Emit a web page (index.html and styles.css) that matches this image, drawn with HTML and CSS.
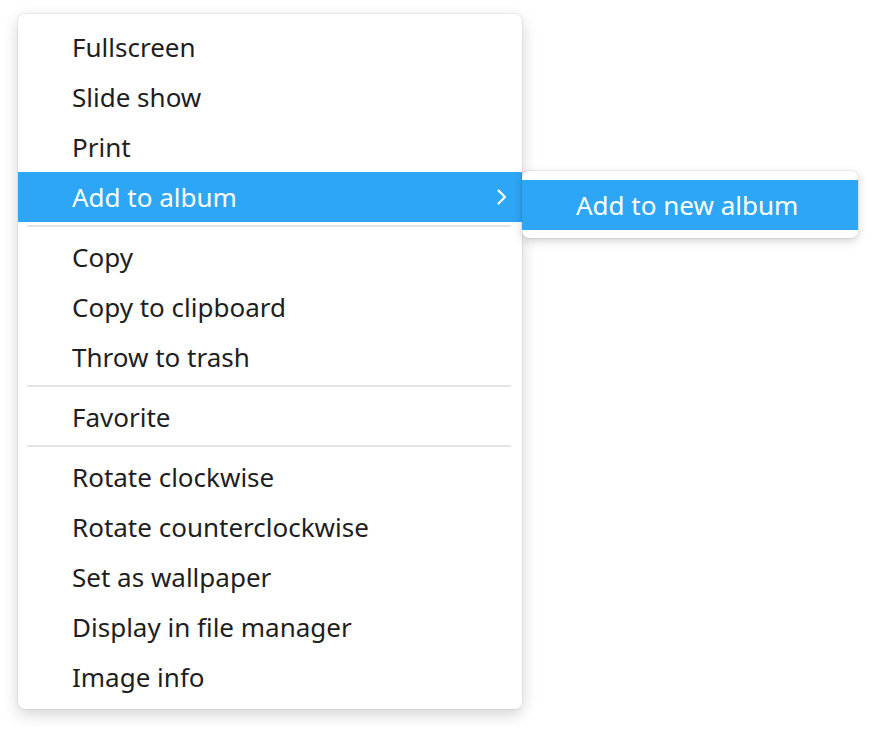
FILE: index.html
```html
<!DOCTYPE html>
<html>
<head>
<meta charset="utf-8">
<link rel="stylesheet" href="styles.css">
</head>
<body>
<div class="stage">
  <div class="menu">
    <div class="item">Fullscreen</div>
    <div class="item">Slide show</div>
    <div class="item">Print</div>
    <div class="item active">Add to album
      <svg class="chev" width="12" height="16" viewBox="0 0 12 16"><path d="M2.5 1.5 L9 8 L2.5 14.5" fill="none" stroke="#fff" stroke-width="2.2" stroke-linecap="round" stroke-linejoin="round"/></svg>
      <div class="submenu">
        <div class="item active">Add to new album</div>
      </div>
    </div>
    <div class="sep"></div>
    <div class="item">Copy</div>
    <div class="item">Copy to clipboard</div>
    <div class="item">Throw to trash</div>
    <div class="sep"></div>
    <div class="item">Favorite</div>
    <div class="sep"></div>
    <div class="item">Rotate clockwise</div>
    <div class="item">Rotate counterclockwise</div>
    <div class="item">Set as wallpaper</div>
    <div class="item">Display in file manager</div>
    <div class="item">Image info</div>
  </div>
</div>
</body>
</html>
```

FILE: styles.css
```css
html, body {
  margin: 0;
  padding: 0;
  background: #ffffff;
}
.stage {
  padding: 14px 0 30px 18px;
}
.menu {
  position: relative;
  width: 504px;
  box-sizing: border-box;
  padding: 8px 0 7px;
  background: #ffffff;
  border-radius: 7px;
  box-shadow: 0 0 0 1px rgba(0,0,0,0.05), 0 5px 16px rgba(0,0,0,0.18);
  font-family: "Noto Sans", sans-serif;
  font-size: 26px;
  color: #1e1e1e;
}
.item {
  position: relative;
  height: 50px;
  line-height: 50px;
  padding-left: 54px;
  white-space: nowrap;
}
.item.active {
  background: #2ea6f6;
  color: #ffffff;
}
.chev {
  position: absolute;
  right: 14px;
  top: 17px;
}
.sep {
  height: 2px;
  margin: 3px 11px 5px 9px;
  background: #e4e4e4;
}
.submenu {
  position: absolute;
  left: 504px;
  top: -1px;
  width: 336px;
  padding: 9px 0 8px;
  background: #ffffff;
  border-radius: 7px;
  box-shadow: 0 0 0 1px rgba(0,0,0,0.05), 0 3px 10px rgba(0,0,0,0.18);
  z-index: 2;
}
.submenu .item {
  padding-left: 54px;
}
```
